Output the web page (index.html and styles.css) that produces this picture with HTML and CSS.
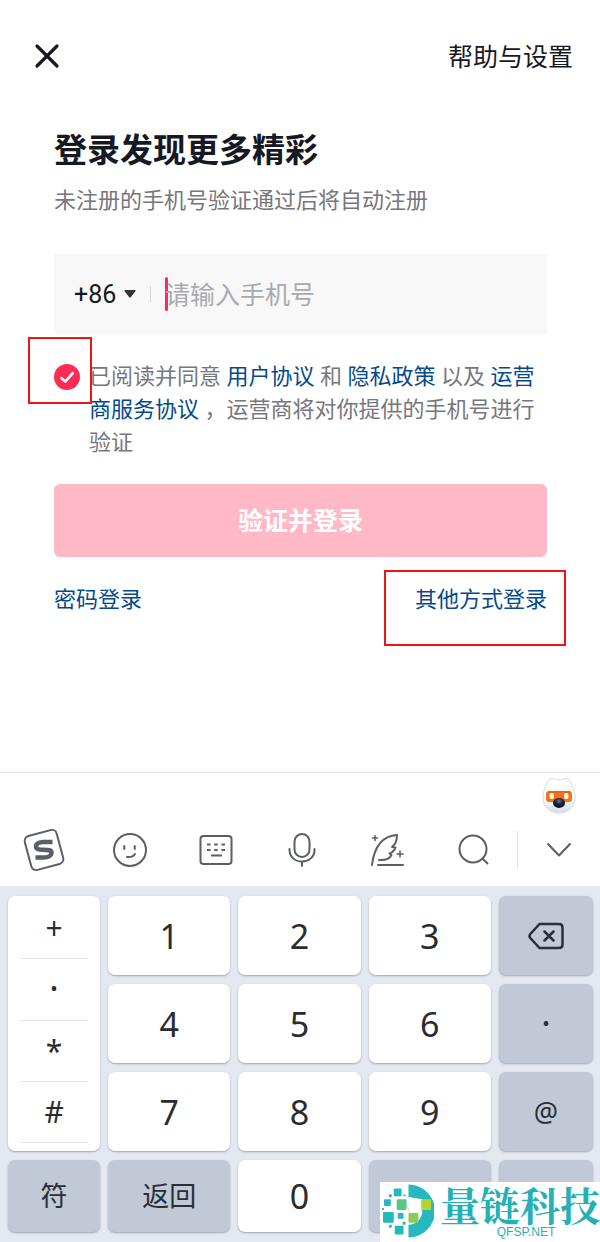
FILE: index.html
```html
<!DOCTYPE html>
<html lang="zh-CN">
<head>
<meta charset="utf-8">
<meta name="viewport" content="width=device-width, initial-scale=1">
<title>登录</title>
<link rel="stylesheet" href="styles.css">
</head>
<body>
<div class="app">
  <header class="topbar">
    <button class="icon-btn" type="button" aria-label="关闭">
      <svg width="26" height="26" viewBox="0 0 26 26" fill="none" stroke="#161823" stroke-width="3.2" stroke-linecap="round"><path d="M3 3 23 23M23 3 3 23"/></svg>
    </button>
    <a class="help" href="#">帮助与设置</a>
  </header>

  <main class="login">
    <h1 class="title">登录发现更多精彩</h1>
    <p class="subtitle">未注册的手机号验证通过后将自动注册</p>

    <div class="phone">
      <select class="code" aria-label="国家代码"><option>+86</option></select>
      <svg class="code-arrow" width="12" height="8" viewBox="0 0 12 8" fill="#333438"><path d="M1 0h10q1 0 .5 1L7 7q-1 1-2 0L.5 1Q0 0 1 0z"/></svg>
      <span class="phone-divider"></span>
      <span class="caret"></span>
      <input class="number" type="tel" placeholder="请输入手机号" aria-label="手机号">
    </div>

    <div class="agreement">
      <input class="agree-box" id="agree" type="checkbox" checked>
      <svg class="tick" width="26" height="26" viewBox="0 0 26 26" fill="none" stroke="#fff" stroke-width="2.6" stroke-linecap="round" stroke-linejoin="round"><path d="M7.5 14.2 11.3 17.6 18.8 9.2"/></svg>
      <span class="mark mark-check"></span>
      <label class="terms" for="agree"><span>已阅读并同意</span> <a href="#">用户协议</a> <span>和</span> <a href="#">隐私政策</a> <span>以及</span> <a href="#">运营商服务协议</a> <span>，运营商将对你提供的手机号进行验证</span></label>
    </div>

    <button class="submit" type="button">验证并登录</button>

    <div class="links">
      <a href="#">密码登录</a>
      <span class="other"><a href="#">其他方式登录</a><span class="mark mark-other"></span></span>
    </div>
  </main>

  <section class="keyboard">
    <div class="assistant">
      <svg width="34" height="38" viewBox="0 0 34 38">
        <defs>
          <linearGradient id="face" x1="0" y1="0" x2="0" y2="1"><stop offset=".55" stop-color="#fff"/><stop offset="1" stop-color="#d5dce6"/></linearGradient>
          <radialGradient id="nose" cx=".5" cy=".3" r=".7"><stop offset="0" stop-color="#66709a"/><stop offset=".5" stop-color="#171c38"/><stop offset="1" stop-color="#0b0f26"/></radialGradient>
        </defs>
        <path d="M8 2C11 0 13 3 17 3s6-3 9-1c3 3 7 11 7 19 0 9-7 15-16 15S1 30 1 21C1 13 5 5 8 2z" fill="url(#face)" stroke="#d3dce7"/>
        <rect x="4" y="14" width="26" height="11" rx="3" fill="#f97312"/>
        <path d="M6 15h22" stroke="#d95a0c" stroke-width="1"/>
        <rect x="7.500" y="16" width="4.500" height="6" rx="2" fill="#fff6dc"/>
        <rect x="22" y="16" width="4.500" height="6" rx="2" fill="#fff6dc"/>
        <ellipse cx="17" cy="26" rx="6" ry="5" fill="url(#nose)"/>
      </svg>
    </div>

    <div class="tools">
      <button class="tool" type="button" aria-label="输入法">
        <svg width="44" height="44" viewBox="0 0 44 44" fill="none" stroke="#5b5e66" stroke-width="2"><rect x="5.500" y="4.500" width="33" height="35" rx="5" transform="rotate(-15 22 22)"/><path d="M30.500 14H21q-7 .5-7 4.500c0 3 3 3.200 7.500 3.200s8.500.3 8 3.300-4 4.500-8 4.500H13.500" stroke-width="4.500"/></svg>
      </button>
      <button class="tool" type="button" aria-label="表情">
        <svg width="36" height="36" viewBox="0 0 36 36" fill="none" stroke="#5b5e66" stroke-width="2" stroke-linecap="round"><circle cx="18" cy="18" r="16"/><path d="M12.300 14v3M22.700 14v3M15 25q6 .5 8-3"/></svg>
      </button>
      <button class="tool" type="button" aria-label="键盘">
        <svg width="34" height="32" viewBox="0 0 34 32" fill="none" stroke="#5b5e66" stroke-width="2"><rect x="1.500" y="2" width="31" height="28" rx="3"/><path d="M8 10.500h3.500M15.200 10.500h3.500M22.500 10.500h3.500M8 16h3.500M15.200 16h3.500M22.500 16h3.500M12 21.500h11"/></svg>
      </button>
      <button class="tool" type="button" aria-label="语音">
        <svg width="30" height="36" viewBox="0 0 30 36" fill="none" stroke="#5b5e66" stroke-width="2" stroke-linecap="round"><rect x="7.500" y="2" width="15" height="23" rx="7.500"/><path d="M2.500 17v1c0 7 5.500 11.500 12.500 11.500S27.500 25 27.500 18v-1M15 30v4"/></svg>
      </button>
      <button class="tool" type="button" aria-label="写作">
        <svg width="36" height="36" viewBox="0 0 36 36" fill="none" stroke="#5b5e66" stroke-width="2" stroke-linecap="round" stroke-linejoin="round"><path d="M2 33C4 17 11 4 27 3c0 5-1 9-5 12l3.500.5c-1 3-3 5-6 6l2 1.500c-2 4-6 5.500-12.500 5M8 33h25"/><path d="M5 3.500v5M2.500 6h5M30 19v6M27 22h6" stroke-width="1.500"/></svg>
      </button>
      <button class="tool" type="button" aria-label="搜索">
        <svg width="32" height="32" viewBox="0 0 32 32" fill="none" stroke="#5b5e66" stroke-width="2" stroke-linecap="round"><circle cx="15" cy="15" r="13.500"/><path d="M24.500 24.500 29.500 29.500"/></svg>
      </button>
      <button class="tool tool-last" type="button" aria-label="收起">
        <svg width="26" height="16" viewBox="0 0 26 16" fill="none" stroke="#5b5e66" stroke-width="2" stroke-linecap="round" stroke-linejoin="round"><path d="M2 2 13 13.500 24 2"/></svg>
      </button>
    </div>

    <div class="keys">
      <div class="symbols">
        <button type="button">+</button>
        <button type="button">•</button>
        <button type="button">*</button>
        <button type="button">#</button>
      </div>
      <button class="key" type="button">1</button>
      <button class="key" type="button">2</button>
      <button class="key" type="button">3</button>
      <button class="key dark" type="button" aria-label="删除">
        <svg width="36" height="28" viewBox="0 0 36 28" fill="none" stroke="#2b2e37" stroke-width="2.500" stroke-linecap="round" stroke-linejoin="round"><path d="M11.500 2H31q3.500 0 3.500 3.500v17Q34.500 26 31 26H11.500L2.300 16q-1.600-2 0-4zM16.500 9.500l9 9M25.500 9.500l-9 9"/></svg>
      </button>
      <button class="key" type="button">4</button>
      <button class="key" type="button">5</button>
      <button class="key" type="button">6</button>
      <button class="key dark dot" type="button">•</button>
      <button class="key" type="button">7</button>
      <button class="key" type="button">8</button>
      <button class="key" type="button">9</button>
      <button class="key dark word" type="button">@</button>
      <button class="key dark word" type="button">符</button>
      <button class="key dark word" type="button">返回</button>
      <button class="key" type="button">0</button>
      <button class="key dark" type="button" aria-label="空格"></button>
      <button class="key dark" type="button" aria-label="换行"></button>
    </div>
  </section>

  <div class="watermark">
    <svg width="54" height="56" viewBox="0 0 54 56">
      <path d="M28 1A27 27 0 0 1 28 55V42A14 14 0 0 0 28 14z" fill="#25b9bd"/>
      <path d="M28 14l10 17 5-6V16z" fill="#fff"/>
      <g fill="#25b9bd"><rect x="13" y="5" width="8" height="8" rx="1"/><rect x="3" y="16" width="7" height="7" rx="1"/><rect x="2" y="29" width="11" height="11" rx="1"/><rect x="17" y="30" width="6" height="6" rx="1"/><rect x="14" y="43" width="9" height="9" rx="1"/><rect x="8" y="11" width="3" height="3" rx="1"/><rect x="23" y="11" width="2" height="2"/><rect x="8" y="42" width="3" height="3" rx="1"/><rect x="22" y="39" width="3" height="3" rx="1"/><rect x="1" y="25" width="2" height="2"/></g>
      <path d="M26 21l4 10M37 31l5-6" stroke="#d4df8a" stroke-width="1"/>
      <rect x="16" y="16" width="10" height="11" rx="1" fill="#5cc585"/><rect x="28" y="30" width="10" height="10" rx="1" fill="#86cc55"/><rect x="41" y="16" width="10" height="11" rx="1" fill="#b4d334"/>
    </svg>
    <div class="brand">
      <span class="brand-name">量链科技</span>
      <span class="brand-site">QFSP.NET</span>
    </div>
  </div>
</div>
</body>
</html>
```
FILE: styles.css
```css
* { box-sizing: border-box; }

body {
  margin: 0;
  background: #fff;
  color: #161823;
  font-family: Roboto, "Noto Sans CJK SC", sans-serif;
}

button {
  border: 0;
  padding: 0;
  background: none;
  color: inherit;
  font: inherit;
}

a { color: #04498d; text-decoration: none; }
svg { display: block; }

.app {
  position: relative;
  display: flex;
  flex-direction: column;
  min-height: 100vh;
}

.topbar {
  display: flex;
  align-items: flex-end;
  justify-content: space-between;
  padding: 38px 27px 0 34px;
}

.icon-btn { padding-bottom: 9px; }
.help { color: #161823; font-size: 25px; line-height: 40px; }

.login { padding: 49px 53px 0 54px; }

.title { margin: 0; font-size: 33px; line-height: 48px; font-weight: 700; }

.subtitle {
  margin: 10px 0 0;
  color: #76777d;
  font-size: 22px;
  line-height: 32px;
}

.phone {
  display: flex;
  align-items: center;
  height: 80px;
  margin-top: 37px;
  padding: 0 20px;
  background: #f8f8f8;
}

.code {
  appearance: none;
  border: 0;
  padding: 2px 0 0;
  background: none;
  color: #161823;
  font: 25px/32px Roboto, sans-serif;
}

.code-arrow { margin-left: 7px; }
.phone-divider { width: 1px; height: 16px; margin: 0 14px; background: #d5d5d8; }
.caret { width: 3px; height: 34px; margin-right: -3px; border-radius: 2px; background: #fe2c55; }

.number {
  flex: 1;
  min-width: 0;
  border: 0;
  padding: 4px 0 0;
  background: none;
  color: #161823;
  font: 25px/36px Roboto, "Noto Sans CJK SC", sans-serif;
}

.number::placeholder { color: #a9aaae; opacity: 1; }

.agreement {
  position: relative;
  display: flex;
  align-items: flex-start;
  gap: 9px;
  margin-top: 26px;
}

.agree-box {
  appearance: none;
  flex: none;
  width: 26px;
  height: 26px;
  margin: 4px 0 0;
  border-radius: 50%;
  background: #fe2c55;
}

.tick { position: absolute; left: 0; top: 4px; pointer-events: none; }

.terms { flex: 1; color: #76777d; font-size: 22px; line-height: 33px; }

.mark { position: absolute; border: 2px solid #ee1519; pointer-events: none; }
.mark-check { left: -26px; top: -23px; width: 64px; height: 67px; }
.mark-other { inset: -14px -19px -30px -31px; }

.submit {
  display: block;
  width: 100%;
  height: 73px;
  margin-top: 25px;
  padding-bottom: 3px;
  border-radius: 6px;
  background: #ffb8c6;
  color: #fff;
  font-size: 25px;
  font-weight: 700;
}

.links {
  display: flex;
  justify-content: space-between;
  margin-top: 27px;
  font-size: 22px;
  line-height: 32px;
}

.other { position: relative; }

.keyboard { margin-top: auto; border-top: 1px solid #e3e4e7; }

.assistant { display: flex; justify-content: flex-end; padding: 4px 24px 0; }

.tools {
  display: grid;
  grid-template-columns: repeat(6, 86fr) 83fr;
  align-items: center;
  padding: 13px 0 14px 1px;
}

.tool { display: flex; align-items: center; justify-content: center; height: 44px; }
.tool-last { height: 38px; border-left: 1px solid #dfe1e5; }

.keys {
  display: grid;
  grid-template-columns: 92fr 122fr 122fr 122fr 94fr;
  grid-template-rows: repeat(3, 79px) 72px;
  gap: 9px 8px;
  padding: 10px 7px 10px 8px;
  background: #e4e8f0;
  font-family: "Noto Sans", "Noto Sans CJK SC", sans-serif;
}

.key, .symbols {
  border-radius: 7px;
  background: #fff;
  box-shadow: 0 1px 2px #9ca5b5;
  color: #2b2c30;
}

.key {
  display: flex;
  align-items: center;
  justify-content: center;
  font-size: 34px;
  line-height: 40px;
}

.dark { background: #c1c8d6; color: #2b2e37; }
.word { font-size: 27px; }
.dot { font-size: 20px; }

.symbols {
  grid-row: span 3;
  display: grid;
  grid-template-rows: repeat(4, 1fr);
  padding: 2px 12px 8px;
}

.symbols button { border-bottom: 1px solid #e3e5e9; font-size: 30px; line-height: 40px; }
.symbols button:nth-child(2) { font-size: 20px; }

.watermark {
  position: absolute;
  right: 0;
  bottom: 0;
  display: flex;
  gap: 6px;
  width: 220px;
  height: 60px;
  padding: 1px 0 0 1px;
  background: #fff;
  color: #25b0b5;
}

.brand { display: flex; flex-direction: column; align-items: center; }
.brand-name { font-family: "Noto Serif CJK SC", "Noto Sans CJK SC", serif; font-size: 40px; font-weight: 700; line-height: 42px; white-space: nowrap; }
.brand-site { padding-left: 12px; font-family: "Liberation Sans", sans-serif; font-size: 12px; line-height: 14px; }
```
